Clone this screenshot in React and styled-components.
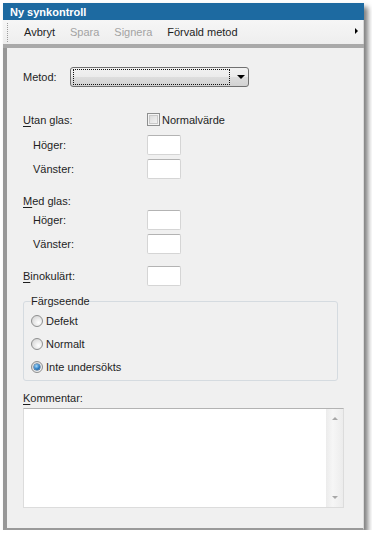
import React, { useState } from 'react'
import styled, { createGlobalStyle } from 'styled-components'

const GlobalStyle = createGlobalStyle`
    html, body {
        margin: 0;
        padding: 0;
        background: #fff;
    }
    body {
        font-family: "Liberation Sans", Arial, sans-serif;
        font-size: 11px;
        color: #1e1e1e;
    }
`;

export default function App() {

    const [colour, setColour] = useState('inte')
    const [comment, setComment] = useState('')

    return (
        <Window>
            <GlobalStyle />
            <TitleBar>Ny synkontroll</TitleBar>
            <Toolbar>
                <Grip />
                <ToolButton>Avbryt</ToolButton>
                <ToolButton $disabled>Spara</ToolButton>
                <ToolButton $disabled>Signera</ToolButton>
                <ToolButton>Förvald metod</ToolButton>
                <MoreArrow />
            </Toolbar>
            <Separator />
            <Body>
                <Row $h={20} $mt={19}>
                    <Label $w={47}>Metod:</Label>
                    <Select>
                        <Focus />
                        <DownArrow />
                    </Select>
                </Row>

                <Row $h={13} $mt={26}>
                    <Label><u>U</u>tan glas:</Label>
                    <Check />
                    <CheckText>Normalvärde</CheckText>
                </Row>
                <Row $h={20} $mt={9}>
                    <Label $indent>Höger:</Label>
                    <Input />
                </Row>
                <Row $h={20} $mt={4}>
                    <Label $indent>Vänster:</Label>
                    <Input />
                </Row>

                <Row $h={14} $mt={15}>
                    <Label><u>M</u>ed glas:</Label>
                </Row>
                <Row $h={20} $mt={2}>
                    <Label $indent>Höger:</Label>
                    <Input />
                </Row>
                <Row $h={20} $mt={4}>
                    <Label $indent>Vänster:</Label>
                    <Input />
                </Row>

                <Row $h={20} $mt={12}>
                    <Label><u>B</u>inokulärt:</Label>
                    <Input />
                </Row>

                <Group>
                    <Legend>Färgseende</Legend>
                    <RadioRow $mt={6} onClick={() => setColour('defekt')}>
                        <Radio $checked={colour === 'defekt'} />
                        Defekt
                    </RadioRow>
                    <RadioRow $mt={10} onClick={() => setColour('normalt')}>
                        <Radio $checked={colour === 'normalt'} />
                        Normalt
                    </RadioRow>
                    <RadioRow $mt={10} onClick={() => setColour('inte')}>
                        <Radio $checked={colour === 'inte'} />
                        Inte undersökts
                    </RadioRow>
                </Group>

                <Row $h={14} $mt={10}>
                    <Label><u>K</u>ommentar:</Label>
                </Row>
                <CommentBox>
                    <textarea value={comment} onChange={e => { setComment(e.target.value) }} />
                    <Scrollbar>
                        <ScrollArrow $up />
                        <ScrollArrow />
                    </Scrollbar>
                </CommentBox>
            </Body>
        </Window>
    )
}

const Window = styled.div`
    margin: 3px 0 0 3px;
    width: 361px;
    height: 527px;
    display: flex;
    flex-direction: column;
    box-shadow: 4px 4px 5px rgba(0,0,0,0.5);
`;

const TitleBar = styled.div`
    height: 17px;
    flex-shrink: 0;
    display: flex;
    align-items: center;
    padding-left: 7px;
    background: #1d6aa1;
    color: #fff;
    font-weight: bold;
`;

const Toolbar = styled.div`
    height: 24px;
    flex-shrink: 0;
    display: flex;
    align-items: center;
    padding-left: 4px;
    background: linear-gradient(#f6f6f6, #eeeeee);
    border-right: 1px solid #d6d6d6;
`;

const Grip = styled.div`
    width: 0;
    height: 19px;
    border-left: 1px dotted #9c9c9c;
    margin-right: 16px;
`;

const ToolButton = styled.div`
    margin-right: 15px;
    color: ${p => p.$disabled ? '#a3a3a3' : '#1e1e1e'};
    white-space: nowrap;
`;

const MoreArrow = styled.div`
    margin-left: auto;
    margin-right: 5px;
    margin-top: -3px;
    width: 0;
    height: 0;
    border-top: 3px solid transparent;
    border-bottom: 3px solid transparent;
    border-left: 3px solid #000;
`;

const Separator = styled.div`
    height: 4px;
    flex-shrink: 0;
    background: #a9a9a9;
`;

const Body = styled.div`
    flex: 1;
    display: flex;
    flex-direction: column;
    background: #f0f0f0;
    border-left: 4px solid #979797;
    border-right: 1px solid #dadada;
    border-bottom: 2px solid #9a9a9a;
    padding-left: 16px;
`;

const Row = styled.div`
    display: flex;
    align-items: center;
    height: ${p => p.$h}px;
    margin-top: ${p => p.$mt}px;
`;

const Label = styled.div`
    width: ${p => p.$w || 124}px;
    flex-shrink: 0;
    box-sizing: border-box;
    padding-left: ${p => p.$indent ? 10 : 0}px;
    line-height: 14px;
    white-space: nowrap;

    u{
        text-decoration: underline;
        text-underline-offset: 2px;
    }
`;

const Select = styled.div`
    width: 179px;
    height: 20px;
    box-sizing: border-box;
    border: 1px solid #707070;
    border-radius: 3px;
    background: linear-gradient(#f2f2f2 0%, #ebebeb 50%, #dddddd 51%, #d2d2d2 100%);
    display: flex;
    align-items: center;
    padding-left: 2px;
`;

const Focus = styled.div`
    width: 157px;
    height: 16px;
    box-sizing: border-box;
    border: 1px dotted #111;
`;

const DownArrow = styled.div`
    margin-left: 7px;
    width: 0;
    height: 0;
    border-left: 4px solid transparent;
    border-right: 4px solid transparent;
    border-top: 4px solid #000;
`;

const Check = styled.div`
    width: 13px;
    height: 13px;
    box-sizing: border-box;
    border: 1px solid #8e8f8f;
    background: linear-gradient(135deg, #d6d6d6, #f8f8f8);
    box-shadow: inset 0 0 0 1px #f4f4f4, inset 0 0 0 2px #c9c9c9;
`;

const CheckText = styled.span`
    margin-left: 2px;
`;

const Input = styled.div`
    width: 34px;
    height: 20px;
    box-sizing: border-box;
    background: #fff;
    border: 1px solid #d5d5d5;
    border-top-color: #b3b3b3;
    border-radius: 2px;
`;

const Group = styled.fieldset`
    width: 315px;
    box-sizing: border-box;
    margin: 8px 0 0 0;
    padding: 0 7px 7px 7px;
    border: 1px solid #d5dbe0;
    border-radius: 3px;
    min-width: 0;
`;

const Legend = styled.legend`
    padding: 0;
    line-height: 14px;
`;

const RadioRow = styled.div`
    display: flex;
    align-items: center;
    height: 13px;
    margin-top: ${p => p.$mt}px;
    gap: 3px;
    cursor: default;
`;

const Radio = styled.div`
    width: 12px;
    height: 12px;
    box-sizing: border-box;
    border-radius: 50%;
    border: 1px solid #8e8f8f;
    background: radial-gradient(circle at 65% 65%, #ffffff, #e6e6e6 50%, #cfcfcf);
    display: flex;
    align-items: center;
    justify-content: center;

    &::after{
        content: '';
        display: ${p => p.$checked ? 'block' : 'none'};
        width: 6px;
        height: 6px;
        border-radius: 50%;
        background: radial-gradient(circle at 40% 35%, #a8dcfb, #2a7cc4 55%, #13477c);
        box-shadow: 0 0 0 0.5px #1b4f80;
    }
`;

const CommentBox = styled.div`
    width: 321px;
    height: 100px;
    box-sizing: border-box;
    margin-top: 3px;
    display: flex;
    background: #fff;
    border: 1px solid #dcdcdc;
    border-top-color: #b3b3b3;

    textarea{
        flex: 1;
        border: none;
        outline: none;
        resize: none;
        background: transparent;
        font: inherit;
        padding: 2px;
    }
`;

const Scrollbar = styled.div`
    width: 17px;
    flex-shrink: 0;
    display: flex;
    flex-direction: column;
    align-items: center;
    justify-content: space-between;
    padding: 8px 0;
    background: linear-gradient(90deg, #ececec, #f6f6f6 40%, #ececec);
`;

const ScrollArrow = styled.div`
    width: 0;
    height: 0;
    border-left: 3px solid transparent;
    border-right: 3px solid transparent;
    ${p => p.$up ? 'border-bottom: 3px solid #a8a8a8;' : 'border-top: 3px solid #a8a8a8;'}
`;
